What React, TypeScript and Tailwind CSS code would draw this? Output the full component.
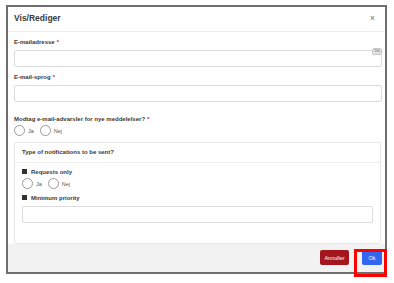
import React from "react";

function Radio({ label }: { label: string }) {
  return (
    <label className="flex items-center gap-[3px] mr-[6px]">
      <span className="w-[11px] h-[11px] rounded-full border border-[#9a9a9a] bg-white" />
      <span className="text-[5.5px] text-[#555]">{label}</span>
    </label>
  );
}

function Label({ text, required, mark }: { text: string; required?: boolean; mark?: boolean }) {
  return (
    <div className="flex items-center h-[8px] text-[6px] font-bold text-[#3a3a3a] leading-none">
      {mark && <span className="w-[5px] h-[5px] bg-[#333] mr-[4px]" />}
      <span>{text}</span>
      {required && <span className="text-[#d21c1c] ml-[2px]">*</span>}
    </div>
  );
}

export default function App() {
  return (
    <div className="relative w-[394px] h-[283px] bg-white pl-[6px] pt-[5px] font-['Liberation_Sans',_Arial,_sans-serif]">
      <div className="w-[381px] h-[269px] border-2 border-[#6e6e6e] flex flex-col bg-white">
        <div className="h-[26px] border-b border-[#eeeeee] flex items-center justify-between pl-[6px] pr-[10px]">
          <span className="text-[8.5px] font-bold text-[#3a3a3a]">Vis/Rediger</span>
          <span className="text-[9px] text-[#777] leading-none">×</span>
        </div>

        <div className="flex-1 pl-[6px] pr-[3px] pt-[6px]">
          <Label text="E-mailadresse" required />
          <div className="relative mt-[4px] h-[17px] border border-[#dcdcdc] rounded-[2px]">
            <span className="absolute -top-[3px] -right-[1px] px-[1px] h-[7px] flex items-center rounded-[2px] bg-[#e3e3e3] border border-[#c8c8c8] text-[3.5px] text-[#666]">
              256
            </span>
          </div>

          <div className="mt-[6px]">
            <Label text="E-mail-sprog" required />
          </div>
          <div className="mt-[4px] h-[17px] border border-[#dcdcdc] rounded-[2px]" />

          <div className="mt-[13px]">
            <Label text="Modtag e-mail-advarsler for nye meddelelser?" required />
          </div>
          <div className="mt-[2px] flex items-center h-[12px]">
            <Radio label="Ja" />
            <Radio label="Nej" />
          </div>

          <div className="mt-[5px] mr-[1px] h-[102px] border border-[#e6e6e6] rounded-[2px] flex flex-col">
            <div className="h-[20px] border-b border-[#eeeeee] flex items-center pl-[7px]">
              <span className="text-[6px] font-bold text-[#3a3a3a]">Type of notifications to be sent?</span>
            </div>
            <div className="px-[7px] pt-[5px]">
              <Label text="Requests only" mark />
              <div className="mt-[2px] flex items-center h-[12px]">
                <Radio label="Ja" />
                <Radio label="Nej" />
              </div>
              <div className="mt-[4px]">
                <Label text="Minimum priority" mark />
              </div>
              <div className="mt-[4px] h-[17px] border border-[#dcdcdc] rounded-[2px]" />
            </div>
          </div>
        </div>

        <div className="h-[30px] bg-[#f2f2f2] flex items-center justify-end pr-[3px] gap-[13px]">
          <button className="w-[29px] h-[15px] bg-[#a3161d] rounded-[2px] text-[5.5px] text-white">
            Annuller
          </button>
          <button className="w-[20px] h-[15px] bg-[#3366ee] rounded-[2px] text-[5.5px] text-white">
            Ok
          </button>
        </div>
      </div>
      <div className="absolute left-[354px] top-[249px] w-[33px] h-[28px] border-[3px] border-[#ff0000]" />
    </div>
  );
}
